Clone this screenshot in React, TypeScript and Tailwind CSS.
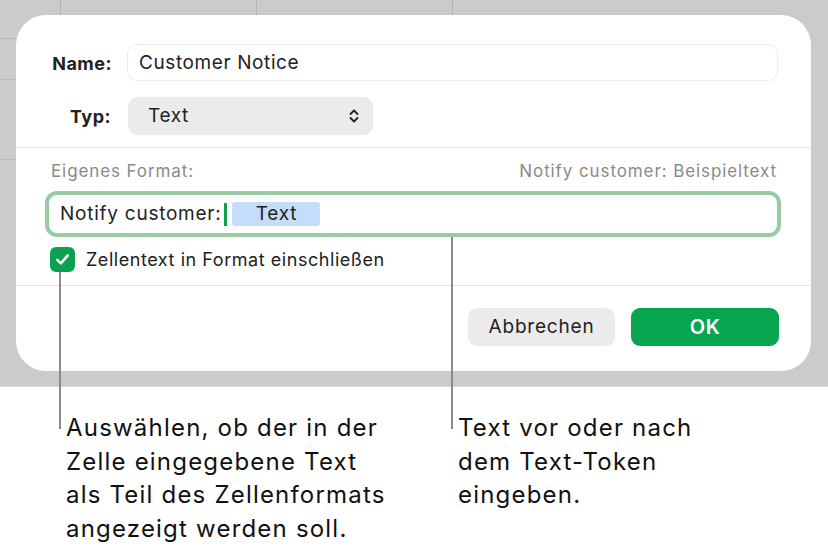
import React from "react";

function UpDown() {
  return (
    <svg width="12" height="16" viewBox="0 0 12 16" fill="none">
      <path d="M2.5 6 L6 2.5 L9.5 6" stroke="#222" strokeWidth="1.8" strokeLinecap="round" strokeLinejoin="round" />
      <path d="M2.5 10 L6 13.5 L9.5 10" stroke="#222" strokeWidth="1.8" strokeLinecap="round" strokeLinejoin="round" />
    </svg>
  );
}

function Check() {
  return (
    <svg width="17" height="17" viewBox="0 0 17 17" fill="none">
      <path d="M3.2 8.8 L6.8 12.4 L13.8 4.4" stroke="#fff" strokeWidth="2.6" strokeLinecap="round" strokeLinejoin="round" />
    </svg>
  );
}

export default function App() {
  return (
    <div className="relative w-[828px] h-[555px] bg-white overflow-hidden text-[#222]" style={{ fontFamily: "Inter, 'Noto Sans', sans-serif" }}>
      {/* top gray canvas */}
      <div className="relative h-[387px] bg-[#cbcbcb] pt-[15px] pl-[16px] border-b border-[#d8d8d8]">
        {/* spreadsheet grid lines */}
        <div className="absolute left-[60px] top-0 h-[20px] w-px bg-[#b4b4b4]" />
        <div className="absolute left-[256px] top-0 h-[20px] w-px bg-[#b4b4b4]" />
        <div className="absolute left-[452px] top-0 h-[20px] w-px bg-[#b4b4b4]" />
        <div className="absolute left-0 top-[38px] w-[20px] h-px bg-[#b9b9b9]" />
        <div className="absolute left-0 top-[79px] w-[20px] h-px bg-[#b9b9b9]" />
        <div className="absolute left-0 top-[159px] w-[20px] h-px bg-[#b9b9b9]" />

        {/* dialog */}
        <div className="relative w-[795px] h-[356px] bg-white rounded-[30px] flex flex-col">
          <div className="pt-[29px] pl-[34px] pr-[33px] flex flex-col">
            <div className="flex items-center h-[37px]">
              <div className="w-[62px] text-right font-bold text-[18px] tracking-[0.5px] pt-[2px]">Name:</div>
              <div className="ml-[15px] flex-1 h-[37px] rounded-[10px] border border-[#ececec] flex items-center pl-[11px] pt-[2px] text-[19px] tracking-[0.6px]">
                Customer Notice
              </div>
            </div>
            <div className="flex items-center h-[38px] mt-[16px]">
              <div className="w-[61px] text-right font-bold text-[18px] tracking-[0.5px]">Typ:</div>
              <div className="ml-[17px] w-[245px] h-[38px] rounded-[9px] bg-[#ebebeb] flex items-center justify-between pl-[20px] pr-[13px] text-[19px] tracking-[0.6px]">
                <span>Text</span>
                <UpDown />
              </div>
            </div>
          </div>
          <div className="mt-[12px] h-px bg-[#e4e4e4]" />
          <div className="flex justify-between items-center pl-[35px] pr-[34px] pt-[14px] h-[34px] text-[17px] tracking-[0.9px] text-[#8a8a8a]">
            <span>Eigenes Format:</span>
            <span>Notify customer: Beispieltext</span>
          </div>
          <div className="ml-[29px] mr-[30px] mt-[9px] h-[46px] rounded-[12px] border-[4px] border-[#98cb9f] flex items-center pl-[11px] text-[19px] tracking-[0.75px]">
            <span>Notify customer:</span>
            <span className="ml-[3px] w-[3px] h-[23px] bg-[#14a049]" />
            <span className="ml-[5px] w-[88px] h-[24px] bg-[#c5dcfb] rounded-[3px] flex items-center justify-center">Text</span>
          </div>
          <div className="flex items-center mt-[10px] ml-[34px] h-[25px]">
            <div className="w-[25px] h-[25px] rounded-[6px] bg-[#0aa24e] flex items-center justify-center">
              <Check />
            </div>
            <span className="ml-[11px] text-[18px] tracking-[0.55px]">Zellentext in Format einschließen</span>
          </div>
          <div className="mt-[13px] h-px bg-[#e4e4e4]" />
          <div className="flex justify-end items-center gap-[16px] pr-[32px] mt-[22px]">
            <div className="w-[147px] h-[38px] rounded-[9px] bg-[#ebebeb] flex items-center justify-center text-[19px] tracking-[0.8px]">Abbrechen</div>
            <div className="w-[148px] h-[38px] rounded-[9px] bg-[#07a54f] flex items-center justify-center text-[20px] tracking-[0.6px] font-semibold text-white">OK</div>
          </div>
        </div>
      </div>

      {/* callout lines */}
      <div className="absolute left-[59px] top-[272px] w-[2px] h-[157px] bg-[#8a8a8a]" />
      <div className="absolute left-[451px] top-[237px] w-[2px] h-[192px] bg-[#8a8a8a]" />

      {/* callout texts */}
      <div className="flex pt-[24px] text-[24px] leading-[33.5px] tracking-[1.2px] text-[#111]">
        <div className="ml-[66px] w-[370px] shrink-0">
          Auswählen, ob der in der<br />
          Zelle eingegebene Text<br />
          als Teil des Zellenformats<br />
          angezeigt werden soll.
        </div>
        <div className="ml-[22px] w-[320px] shrink-0">
          Text vor oder nach<br />
          dem Text-Token<br />
          eingeben.
        </div>
      </div>
    </div>
  );
}
